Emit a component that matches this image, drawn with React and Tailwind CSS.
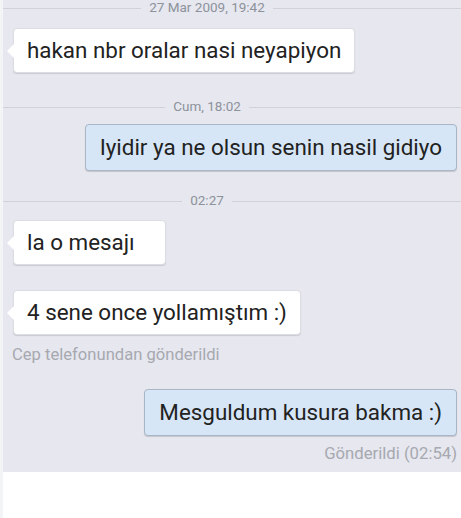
const messages = [
  { type: 'sep', text: '27 Mar 2009, 19:42' },
  { type: 'in', text: 'hakan nbr oralar nasi neyapiyon' },
  { type: 'sep', text: 'Cum, 18:02' },
  { type: 'out', text: 'Iyidir ya ne olsun senin nasil gidiyo' },
  { type: 'sep', text: '02:27' },
  { type: 'in', text: 'la o mesajı', trailing: true },
  { type: 'in', text: '4 sene once yollamıştım :)', note: 'Cep telefonundan gönderildi' },
  { type: 'out', text: 'Mesguldum kusura bakma :)', note: 'Gönderildi (02:54)' },
];

function Separator({ text }) {
  return (
    <div className="flex items-center h-[16px]">
      <div className="flex items-center w-[408px]">
        <div className="flex-1 h-px bg-[#cfd2da]" />
        <span className="px-2 text-[13.5px] leading-none text-[#8d929b]">{text}</span>
        <div className="flex-1 h-px bg-[#cfd2da]" />
      </div>
      <div className="flex-1 h-px bg-[#cfd2da]" />
    </div>
  );
}

function Incoming({ text, note, trailing }) {
  return (
    <div className="flex flex-col items-start pl-[10px]">
      <div className="relative bg-white rounded-[4px] border border-[#dcdde2] shadow-[0_1px_1px_rgba(0,0,0,0.12)] h-[45px] flex items-center px-[13px] text-[22.4px] text-[#222]">
        <span className="absolute -left-[7px] top-[15px] w-0 h-0 border-y-[7px] border-y-transparent border-r-[7px] border-r-white" />
        {text}
        {trailing && <span className="w-[17px]" />}
      </div>
      {note && <div className="mt-[8px] -ml-[1px] text-[16.6px] text-[#a6a9b0]">{note}</div>}
    </div>
  );
}

function Outgoing({ text, note }) {
  return (
    <div className="flex flex-col items-end pr-[4px]">
      <div className="bg-[#d7e6f6] rounded-[4px] border border-[#a9b6c6] shadow-[0_1px_1px_rgba(0,0,0,0.15)] h-[47px] flex items-center px-[14px] text-[22.4px] text-[#222]">
        {text}
      </div>
      {note && <div className="mt-[5px] text-[16.7px] text-[#a6a9b0]">{note}</div>}
    </div>
  );
}

export default function App() {
  return (
    <div className="w-[461px] h-[518px] bg-white flex" style={{ fontFamily: 'Roboto, "Noto Sans", sans-serif' }}>
      <div className="w-[3px] bg-[#f3f4f6]" />
      <div className="flex-1 flex flex-col">
        <div className="h-[472px] bg-[#e6e7ef] flex flex-col">
          <Separator text={messages[0].text} />
          <div className="mt-[12px]"><Incoming text={messages[1].text} /></div>
          <div className="mt-[26px]"><Separator text={messages[2].text} /></div>
          <div className="mt-[9px]"><Outgoing text={messages[3].text} /></div>
          <div className="mt-[22px]"><Separator text={messages[4].text} /></div>
          <div className="mt-[11px]"><Incoming text={messages[5].text} trailing={messages[5].trailing} /></div>
          <div className="mt-[25px]"><Incoming text={messages[6].text} note={messages[6].note} /></div>
          <div className="mt-[21px]"><Outgoing text={messages[7].text} note={messages[7].note} /></div>
        </div>
      </div>
    </div>
  );
}
